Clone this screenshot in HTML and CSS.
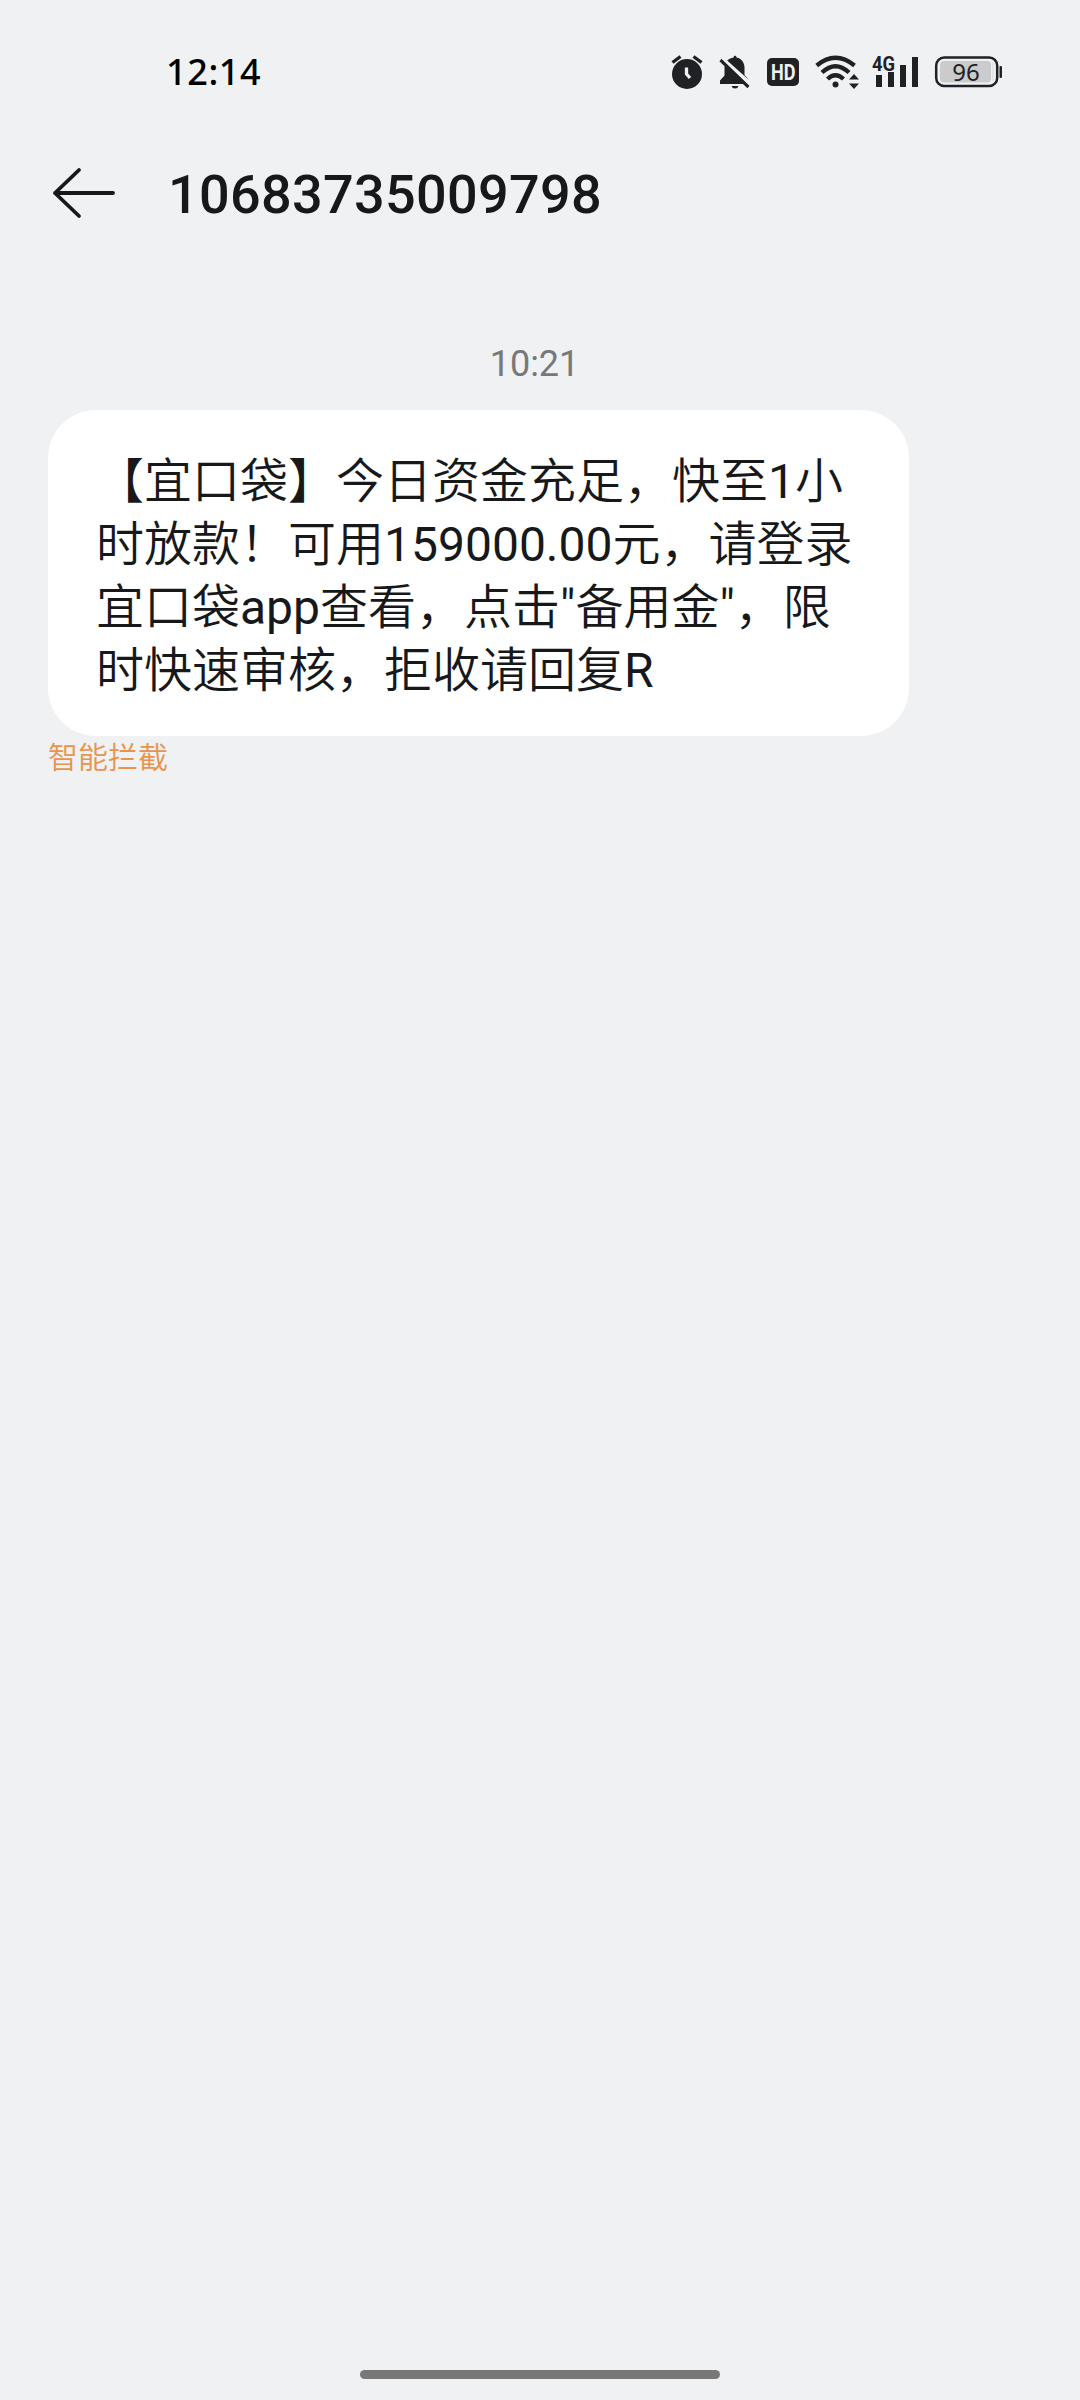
FILE: index.html
```html
<!DOCTYPE html>
<html lang="zh-CN">
<head>
<meta charset="utf-8">
<title>10683735009798</title>
<link rel="stylesheet" href="styles.css">
</head>
<body>
<div class="status">
  <time class="clock">12:14</time>
  <div class="icons">
    <svg class="alarm" width="34" height="36" viewBox="0 0 34 36">
      <circle cx="17" cy="20" r="15" fill="#202124"/>
      <path d="M2.5 8.500 10.500 2.500M31.500 8.500 23.500 2.500" stroke="#202124" stroke-width="3.400" fill="none"/>
      <path d="M16.500 13.500V20L20 24" stroke="#eff1f3" stroke-width="3.300" fill="none"/>
    </svg>
    <svg class="bell" width="32" height="36" viewBox="0 0 32 36">
      <path d="M8 6.500Q11 4 14.500 3.500C14.800 1 17.200 1 17.600 3.500C22.500 4.500 25.500 8.500 25.500 13.500V21L30 26Z" fill="#202124"/>
      <path d="M6.500 9.500 26 30H1V26.500L5.500 21.500V13.500Q5.500 11 6.500 9.500Z" fill="#202124"/>
      <path d="M1.500 6 29.500 33" stroke="#202124" stroke-width="3.200"/>
      <path d="M3.500 3.800 31.500 30.800" stroke="#eff1f3" stroke-width="2.400"/>
      <path d="M12.500 32H19.500Q18.800 34.500 16 34.500T12.500 32Z" fill="#202124"/>
    </svg>
    <svg class="hd" width="32" height="28" viewBox="0 0 32 28">
      <rect width="32" height="28" rx="5" fill="#202124"/>
      <text x="4" y="22" textLength="24.500" lengthAdjust="spacingAndGlyphs" class="hd-text">HD</text>
    </svg>
    <svg class="wifi" width="45" height="36" viewBox="0 0 45 36">
      <g fill="none" stroke="#202124" stroke-width="4.300">
        <path d="M1.700 11.500Q20.500-4 39.500 11.500"/>
        <path d="M7 18.500Q20.500 6 34 18.500"/>
        <path d="M12.500 25Q20.500 17.500 28.500 25"/>
      </g>
      <circle cx="20.500" cy="30.500" r="3" fill="#202124"/>
      <path d="M34 25.500 39 20 44 25.500ZM34 29.500H44L39 35Z" fill="#202124"/>
    </svg>
    <svg class="signal" width="48" height="36" viewBox="0 0 48 36">
      <text x="0" y="16.500" textLength="23" lengthAdjust="spacingAndGlyphs" class="net-text">4G</text>
      <path d="M4 21H10V33H4ZM16 18H22V33H16ZM28 11H34V33H28ZM40 3H46V33H40Z" fill="#202124"/>
    </svg>
    <svg class="battery" width="68" height="32" viewBox="0 0 68 32">
      <rect x="1.200" y="1.500" width="61" height="28.500" rx="8" fill="none" stroke="#202124" stroke-width="2.500"/>
      <rect x="5" y="5" width="51" height="21.500" rx="4" fill="#cacbcd"/>
      <path d="M57 5.500Q59 6.500 59 9V22.500Q59 25 57 26Z" fill="#e4e5e7"/>
      <rect x="64.500" y="10" width="2.500" height="12" rx="1" fill="#202124"/>
      <text x="31" y="24.500" text-anchor="middle" class="level">96</text>
    </svg>
  </div>
</div>
<header class="header">
  <svg class="back" width="66" height="54" viewBox="0 0 66 54">
    <path d="M28 4 4 27 28 50M4 27H62" fill="none" stroke="#17181a" stroke-width="3.800" stroke-linecap="round" stroke-linejoin="round"/>
  </svg>
  <h1 class="number">10683735009798</h1>
</header>
<main class="thread">
  <time class="sent">10:21</time>
  <p class="bubble">【宜口袋】今日资金充足，快至1小时放款！可用159000.00元，请登录宜口袋app查看，点击"备用金"，限时快速审核，拒收请回复R</p>
  <span class="tag">智能拦截</span>
</main>
<div class="home-bar"></div>
</body>
</html>
```
FILE: styles.css
```css
* { box-sizing: border-box; }
body {
  margin: 0;
  width: 1080px;
  height: 2400px;
  display: flex;
  flex-direction: column;
  background: #eff1f3;
  color: #17181a;
  font-family: Roboto, "Noto Sans CJK SC DemiLight", "Noto Sans CJK SC", sans-serif;
  text-spacing-trim: space-all;
}
svg { overflow: visible; }
.status {
  height: 144px;
  padding: 0 77px 0 166px;
  display: flex;
  align-items: center;
  justify-content: space-between;
}
.clock {
  font: 500 36px/44px "Noto Sans", sans-serif;
  letter-spacing: .6px;
  color: #000;
}
.icons { display: flex; align-items: center; }
.bell { margin-left: 15px; }
.hd { margin-left: 16px; }
.wifi { margin-left: 16px; }
.signal { margin-left: 12px; }
.battery { margin-left: 15px; }
.hd-text { font: 700 22px Roboto, sans-serif; fill: #eff1f3; }
.net-text { font: 700 20px Roboto, sans-serif; fill: #202124; }
.level { font: 400 24px "Noto Sans", sans-serif; fill: #202124; }
.header {
  height: 98px;
  padding-left: 51px;
  display: flex;
  align-items: center;
}
.number {
  margin: 3px 0 0 51px;
  font-size: 54px;
  line-height: 64px;
  font-weight: 500;
  letter-spacing: .3px;
}
.thread {
  flex: 1;
  padding: 100px 48px 0;
  display: flex;
  flex-direction: column;
  align-items: flex-start;
}
.sent {
  width: 973px;
  font-size: 36px;
  line-height: 44px;
  text-align: center;
  color: #77787a;
}
.bubble {
  margin: 24px 0 0;
  width: 861px;
  height: 326px;
  padding: 40px 48px 34px;
  border-radius: 48px;
  background: #fff;
  font-size: 48px;
  line-height: 63px;
  word-break: break-all;
}
.tag {
  margin-top: 1px;
  font-size: 30px;
  line-height: 42px;
  color: #e8944c;
}
.home-bar {
  align-self: center;
  width: 360px;
  height: 9px;
  margin-bottom: 21px;
  border-radius: 5px;
  background: #787878;
}
```
